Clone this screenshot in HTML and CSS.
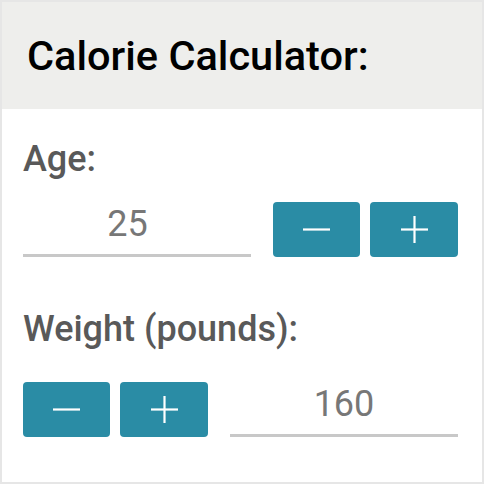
FILE: index.html
```html
<!DOCTYPE html>
<html lang="en">
<head>
<meta charset="utf-8">
<title>Calorie Calculator</title>
<link rel="stylesheet" href="styles.css">
</head>
<body>
<div class="card">
  <div class="header">
    <h1 class="title">Calorie Calculator:</h1>
  </div>
  <div class="content">
    <label class="label" for="age">Age:</label>
    <div class="row row-input-first">
      <input class="num num-age" id="age" type="text" value="25">
      <button class="btn" aria-label="decrease age">
        <svg width="27" height="27" viewBox="0 0 27 27"><line x1="0" y1="13.5" x2="27" y2="13.5" stroke="#fff" stroke-width="2.2"/></svg>
      </button>
      <button class="btn" aria-label="increase age">
        <svg width="27" height="27" viewBox="0 0 27 27"><line x1="0" y1="13.5" x2="27" y2="13.5" stroke="#fff" stroke-width="2.2"/><line x1="13.5" y1="0" x2="13.5" y2="27" stroke="#fff" stroke-width="2.2"/></svg>
      </button>
    </div>
    <label class="label label-weight" for="weight">Weight (pounds):</label>
    <div class="row row-buttons-first">
      <button class="btn" aria-label="decrease weight">
        <svg width="27" height="27" viewBox="0 0 27 27"><line x1="0" y1="13.5" x2="27" y2="13.5" stroke="#fff" stroke-width="2.2"/></svg>
      </button>
      <button class="btn" aria-label="increase weight">
        <svg width="27" height="27" viewBox="0 0 27 27"><line x1="0" y1="13.5" x2="27" y2="13.5" stroke="#fff" stroke-width="2.2"/><line x1="13.5" y1="0" x2="13.5" y2="27" stroke="#fff" stroke-width="2.2"/></svg>
      </button>
      <input class="num" id="weight" type="text" value="160">
    </div>
  </div>
</div>
</body>
</html>
```
FILE: styles.css
```css
* { box-sizing: border-box; }
html, body { margin: 0; padding: 0; background: #fff; }
body { font-family: Roboto, "Liberation Sans", sans-serif; }

.card {
  width: 484px;
  height: 484px;
  border: 2px solid #e6e6e6;
  background: #fff;
}

.header {
  height: 107px;
  background: #eeeeec;
  padding: 0 0 0 25px;
  display: flex;
  align-items: center;
}

.title {
  margin: 0;
  font-size: 41.5px;
  font-weight: 500;
  line-height: 48px;
  color: #000;
}

.content {
  padding: 29px 24px 0 21px;
  display: flex;
  flex-direction: column;
}

.label {
  display: block;
  font-size: 36px;
  font-weight: 500;
  line-height: 42px;
  color: #595959;
  margin-bottom: 22px;
}

.label-weight {
  margin-top: 51px;
  margin-bottom: 32px;
}

.row {
  display: grid;
  height: 55px;
  column-gap: 10px;
}

.row-input-first { grid-template-columns: 240px 87px 88px; }
.row-input-first .num { width: 228px; }
.row-buttons-first { grid-template-columns: 87px 88px 240px; }
.row-buttons-first .num { width: 228px; margin-left: 12px; }

.num {
  height: 55px;
  border: none;
  border-bottom: 3px solid #c8c8c8;
  background: transparent;
  font-family: Roboto, "Liberation Sans", sans-serif;
  font-size: 36px;
  font-weight: 400;
  color: #777;
  text-align: center;
  padding: 0 0 9px 0;
  outline: none;
}

.num-age { padding-right: 19px; }

.btn {
  height: 55px;
  border: none;
  border-radius: 4px;
  background: #2a8ca5;
  padding: 0;
  display: flex;
  align-items: center;
  justify-content: center;
  cursor: pointer;
}
.btn svg { display: block; }
```
